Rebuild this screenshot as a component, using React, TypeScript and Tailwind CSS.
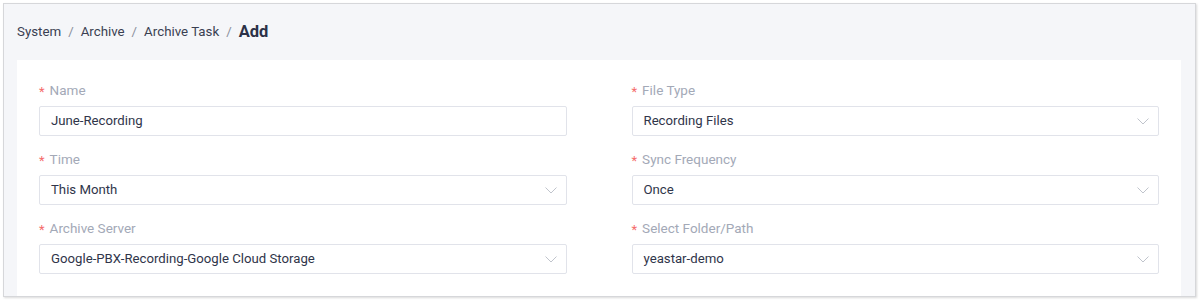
import React from 'react';

const Chevron = () => (
  <svg width="12" height="7" viewBox="0 0 12 7" fill="none" className="shrink-0">
    <path d="M0.5 0.5L6 6L11.5 0.5" stroke="#c0c4cc" strokeWidth="1" />
  </svg>
);

function Field({ label, value, select }: { label: string; value: string; select?: boolean }) {
  return (
    <div className="flex flex-col">
      <div className="flex items-center h-[20px] text-[13.5px] text-[#a3a9b7]">
        <span className="text-[#f56c6c] mr-[5px] text-[13px] leading-none mt-[3px]">*</span>
        <span>{label}</span>
      </div>
      <div className="mt-[6px] h-[30px] border border-[#e1e3ea] rounded-[2px] bg-white flex items-center justify-between pl-[11px] pr-[9px] text-[13.2px] text-[#30354a]">
        <span>{value}</span>
        {select && <Chevron />}
      </div>
    </div>
  );
}

export default function App() {
  return (
    <div className="w-[1200px] h-[302px] bg-white pt-[3px] pl-[3px] font-['Roboto','Liberation_Sans',sans-serif]">
      <div className="w-[1193px] h-[294px] bg-[#f5f6f9] border border-[#d6d7da] shadow-[1px_1px_2px_rgba(0,0,0,0.15)] overflow-hidden flex flex-col">
        <div className="h-[56px] flex items-center pl-[13px] text-[13.3px] text-[#3a3f52]">
          <span>System</span>
          <span className="mx-[7px] text-[#8a8f9c]">/</span>
          <span>Archive</span>
          <span className="mx-[7px] text-[#8a8f9c]">/</span>
          <span>Archive Task</span>
          <span className="mx-[7px] text-[#8a8f9c]">/</span>
          <span className="text-[16.5px] font-bold text-[#2b3147]">Add</span>
        </div>
        <div className="ml-[13px] mr-[14px] flex-1 bg-white px-[22px] pt-[20px]">
          <div className="grid grid-cols-2 gap-x-[65px] gap-y-[13px]">
            <Field label="Name" value="June-Recording" />
            <Field label="File Type" value="Recording Files" select />
            <Field label="Time" value="This Month" select />
            <Field label="Sync Frequency" value="Once" select />
            <Field label="Archive Server" value="Google-PBX-Recording-Google Cloud Storage" select />
            <Field label="Select Folder/Path" value="yeastar-demo" select />
          </div>
        </div>
      </div>
    </div>
  );
}
